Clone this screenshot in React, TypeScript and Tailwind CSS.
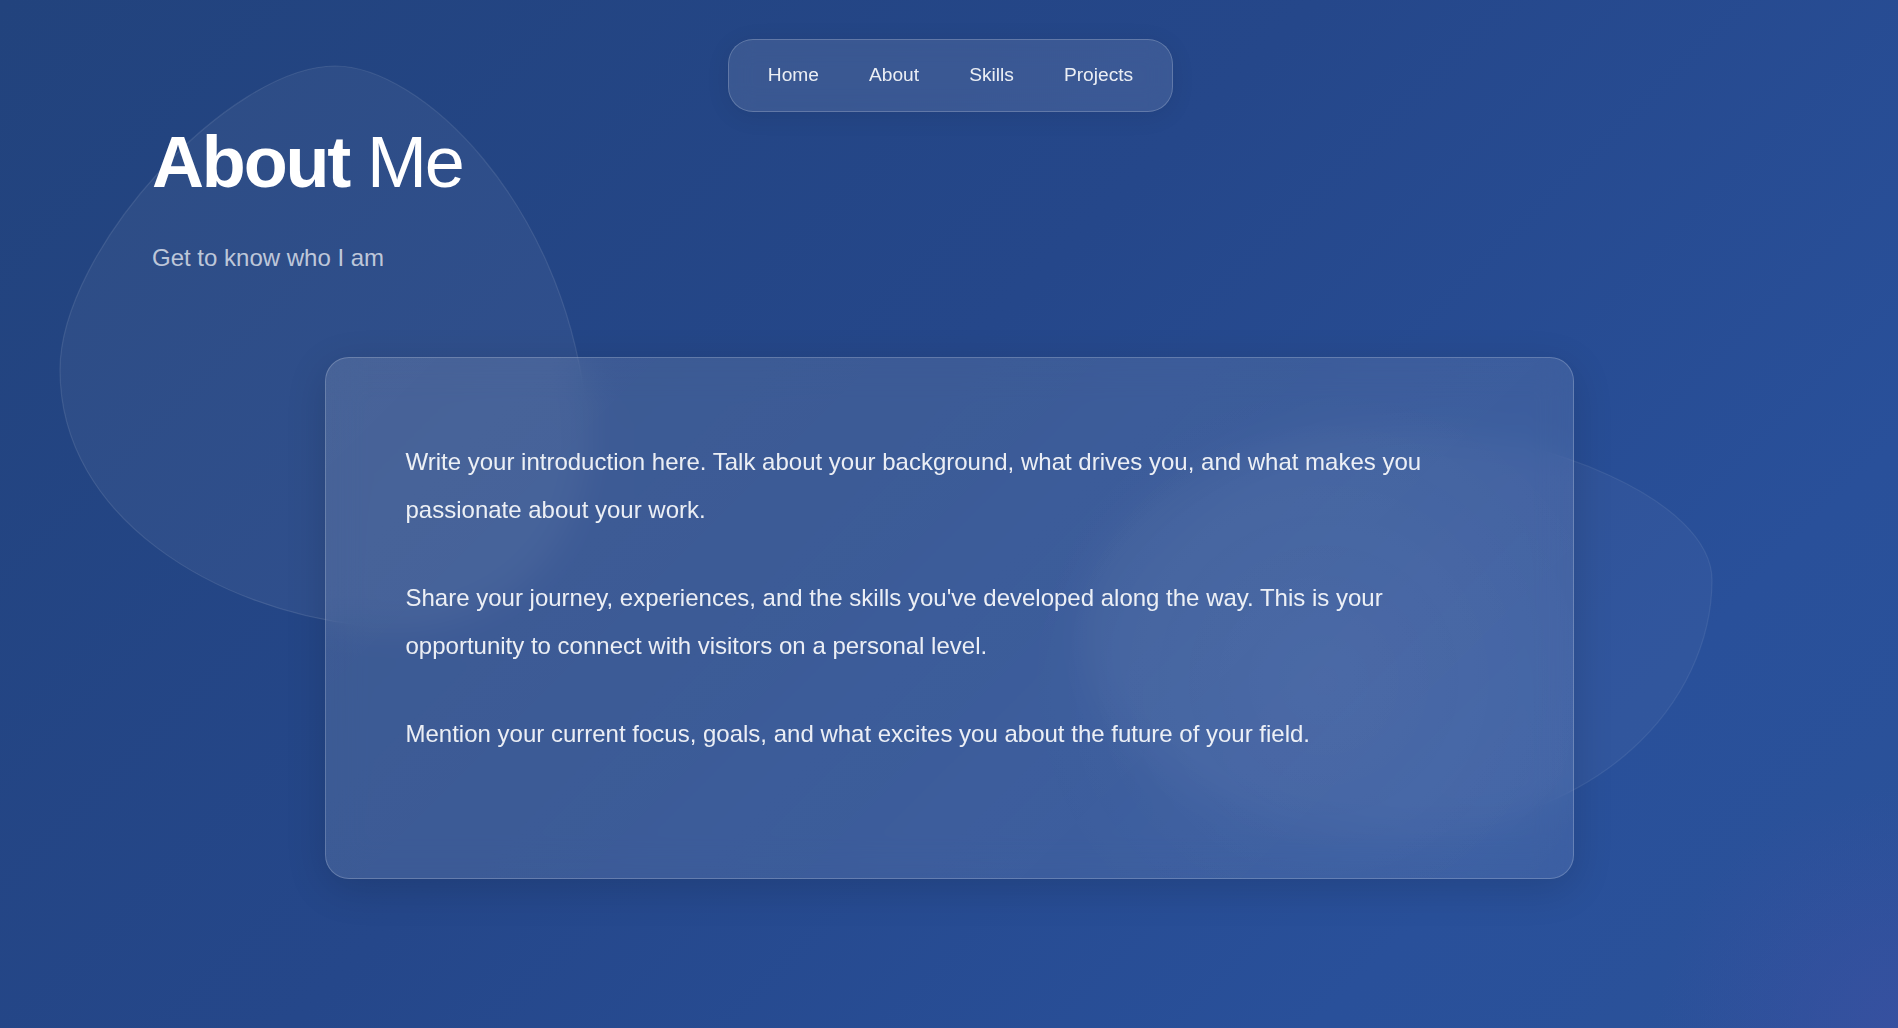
import React from 'react';

const navLinks = ['Home', 'About', 'Skills', 'Projects'];

const paragraphs = [
  'Write your introduction here. Talk about your background, what drives you, and what makes you passionate about your work.',
  "Share your journey, experiences, and the skills you've developed along the way. This is your opportunity to connect with visitors on a personal level.",
  'Mention your current focus, goals, and what excites you about the future of your field.',
];

function Blobs() {
  return (
    <svg
      className="pointer-events-none absolute left-0 top-0"
      width="1898"
      height="1028"
      viewBox="0 0 1898 1028"
      aria-hidden="true"
    >
      {/* left blob behind the heading */}
      <path
        d="M335,66 C420,66 560,200 585,400 C600,560 480,640 360,625 C220,610 60,520 60,370 C60,250 230,66 335,66 Z"
        fill="rgba(255,255,255,0.05)"
        stroke="rgba(255,255,255,0.1)"
        strokeWidth="1.2"
      />
      {/* right blob peeking out behind the card */}
      <path
        d="M1400,430 C1540,430 1712,500 1712,580 C1712,700 1600,830 1400,830 C1200,830 1085,730 1085,630 C1085,520 1240,430 1400,430 Z"
        fill="rgba(255,255,255,0.04)"
        stroke="rgba(255,255,255,0.08)"
        strokeWidth="1.2"
      />
    </svg>
  );
}

export default function App() {
  return (
    <div className="relative min-h-screen w-full overflow-hidden bg-[linear-gradient(135deg,#22437d_0%,#25478a_45%,#29509a_80%,#2b5299_100%)] font-['Liberation_Sans',Arial,sans-serif] text-white">
      {/* purple tint in the far corner */}
      <div className="pointer-events-none absolute inset-0 bg-[radial-gradient(circle_at_100%_100%,rgba(72,78,170,0.4),transparent_240px)]" />
      <Blobs />

      <div className="relative">
        {/* Top navigation pill */}
        <div className="flex justify-center pt-[39px]">
          <nav className="ml-[3px] flex h-[73px] items-center gap-[50px] rounded-[25px] border border-white/20 bg-white/10 px-[39px] shadow-[0_4px_24px_rgba(0,0,0,0.08)] backdrop-blur-md">
            {navLinks.map((link) => (
              <a key={link} href="#" className="text-[19.2px] leading-[1.5] text-white/90">
                {link}
              </a>
            ))}
          </nav>
        </div>

        {/* Page heading */}
        <header className="mx-auto max-w-[1594px]">
          <h1 className="mt-[14px] text-[72px] font-bold leading-none tracking-[-0.03em] text-white">
            About <span className="font-normal">Me</span>
          </h1>
          <p className="mt-[44px] text-[24px] leading-8 text-white/70">Get to know who I am</p>
        </header>

        {/* Intro card */}
        <div className="mx-auto mt-[83px] w-[1249px] rounded-[24px] border border-white/20 bg-[radial-gradient(circle_at_80%_62%,rgba(255,255,255,0.04),transparent_300px),linear-gradient(135deg,rgba(255,255,255,0.12),rgba(255,255,255,0.09))] p-20 shadow-[0_10px_40px_rgba(0,0,0,0.14)] backdrop-blur-[18px]">
          {paragraphs.map((text, idx) => (
            <p key={idx} className="mb-10 text-[24px] leading-loose text-white/90">
              {text}
            </p>
          ))}
        </div>
      </div>
    </div>
  );
}
